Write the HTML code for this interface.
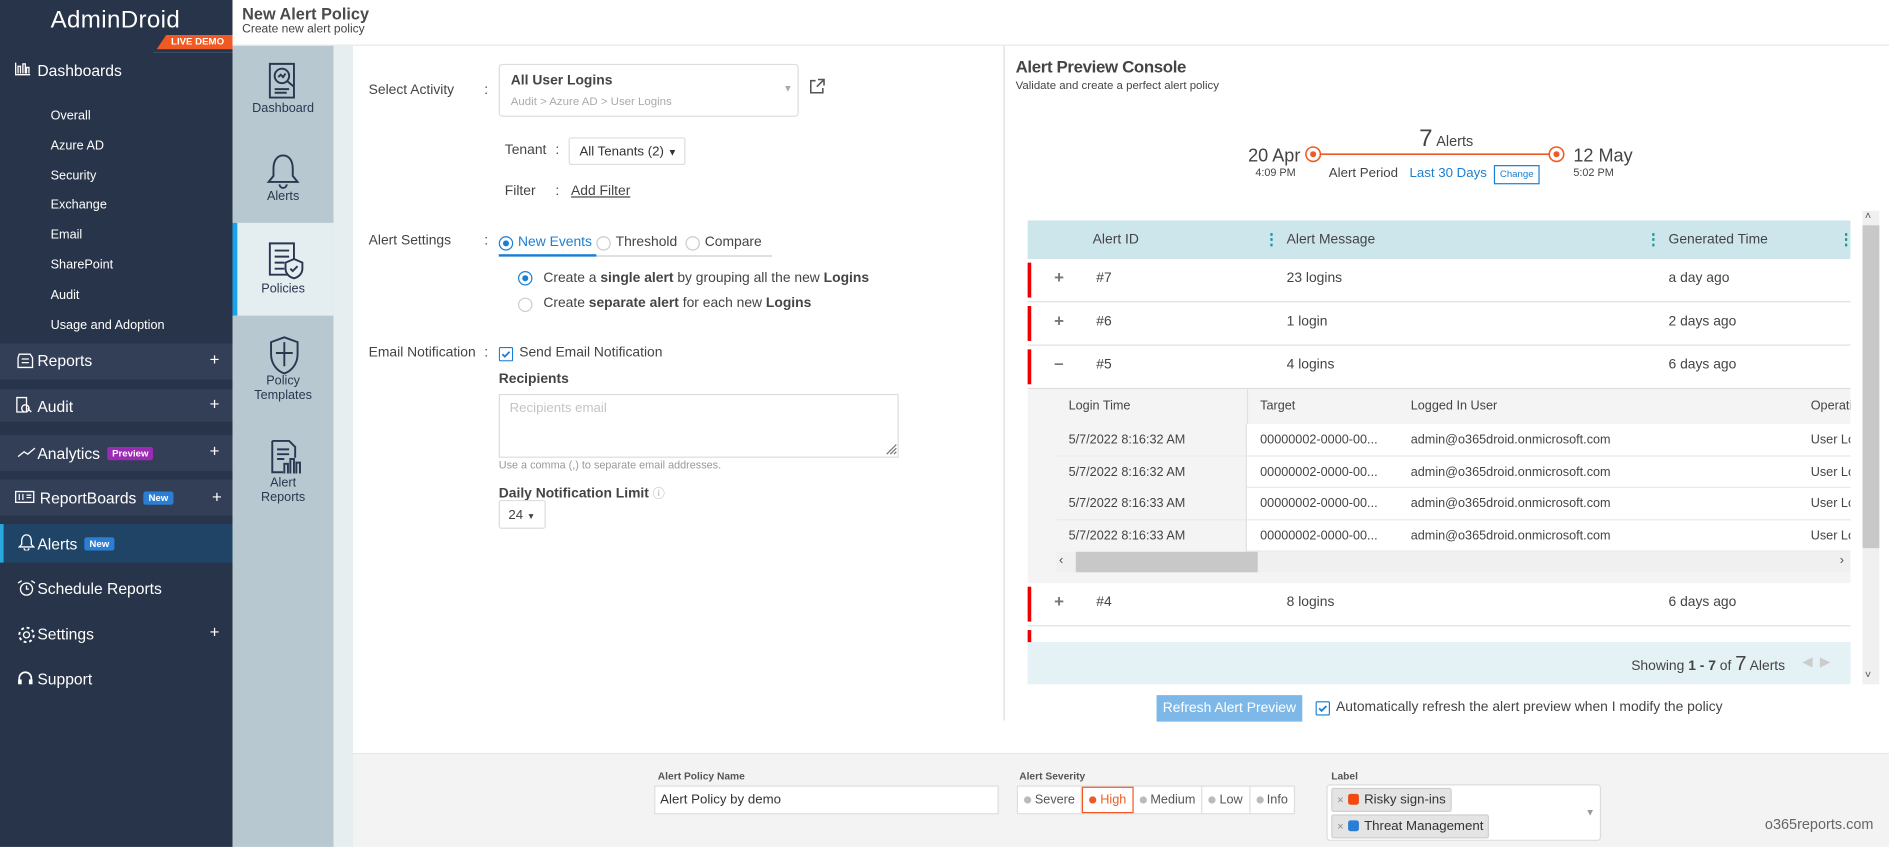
<!DOCTYPE html>
<html><head><meta charset="utf-8">
<style>
*{box-sizing:border-box;margin:0;padding:0}
html,body{width:1889px;height:847px;overflow:hidden;background:#fff}
#root{position:absolute;left:0;top:0;width:1568px;height:703px;transform:scale(1.20472);transform-origin:0 0;font-family:"Liberation Sans",Arial,sans-serif;color:#444;font-size:11px}
.a{position:absolute;white-space:nowrap}
.side{left:0;top:0;width:193px;height:703px;background:#283449}
.side .t{color:#fff}
.band{position:absolute;left:0;width:193px;height:30px;background:#323f57}
.plus{position:absolute;left:174px;color:#fff;font-size:14px}
.badge{display:inline-block;font-size:8px;font-weight:bold;color:#fff;padding:1px 4px;border-radius:2px;vertical-align:2px;margin-left:6px}
.col2{left:193px;top:38px;width:84px;height:665px;background:#b8c8d0}
.ci{position:absolute;left:0;width:84px;text-align:center;color:#2b3750;font-size:10.5px;line-height:12px}
.ico{stroke:#2b3750;fill:none;stroke-width:1.6}
.lbl{font-size:11.5px;color:#444}
.row{position:absolute;left:853px;width:683px;height:36px;background:#fff;border-bottom:1px solid #ddd}
.row .bar{position:absolute;left:0;top:3px;width:3px;height:29px;background:#e00}
.row span{position:absolute;top:10px;font-size:11.5px;color:#444;white-space:nowrap}
.sub{position:absolute;left:877px;width:659px;height:26.5px;border-bottom:1px solid #e6e6e6;background:#fff}
.sub span{position:absolute;top:7px;font-size:10.5px;color:#444;white-space:nowrap}
.sub .lt{left:0;top:0;width:158px;height:26px;background:#f4f4f4;border-right:1px solid #e0e0e0}
.kb{position:absolute;color:#1a9a9a;font-weight:bold;font-size:13px;top:191px}
.sev{display:inline-block;height:22px;line-height:22px;padding:0 5px;border-right:1px solid #ddd;font-size:10.5px;color:#555;vertical-align:top}
.dot{display:inline-block;width:6px;height:6px;border-radius:50%;background:#bbb;margin-right:3px;vertical-align:0}
.chip{position:absolute;left:3px;height:20px;background:#e4e4e4;border:1px solid #d0d0d0;border-radius:2px;padding:0 4px;line-height:18px;font-size:11px;color:#333}
.sq{display:inline-block;width:9px;height:9px;border-radius:2px;margin:0 4px 0 4px;vertical-align:-1px}
</style></head><body><div id="root">

<!-- sidebar -->
<div class="a side">
 <div class="a t" style="left:42px;top:6px;font-size:20px;letter-spacing:0.3px">AdminDroid</div>
 <div class="a" style="left:130px;top:29px;width:63px;height:12px;background:#f05a22;clip-path:polygon(8px 0,100% 0,100% 100%,0 100%);color:#fff;font-size:8px;font-weight:bold;text-align:right;padding-right:7px;line-height:12px">LIVE DEMO</div>
 <div class="a" style="left:127px;top:43px;width:66px;height:1px;background:#3d4a63"></div>
 <svg class="a" style="left:12px;top:51px" width="14" height="12"><path d="M1 1v10h12M3 10V4h2v6M7 10V2h2v8M10 10V5h2v5" stroke="#fff" fill="none" stroke-width="1.1"/></svg>
 <div class="a t" style="left:31px;top:51px;font-size:13px">Dashboards</div>
 <div class="a t" style="left:42px;top:84px;font-size:10.5px;line-height:24.8px">Overall<br>Azure AD<br>Security<br>Exchange<br>Email<br>SharePoint<br>Audit<br>Usage and Adoption</div>
 <div class="band" style="top:285px"></div><div class="band" style="top:323px;height:27px"></div><div class="band" style="top:361px"></div><div class="band" style="top:398px"></div>
 <div class="a" style="left:0;top:435px;width:193px;height:32px;background:#1f4466;border-left:3px solid #29a8e0"></div>
 <svg class="a" style="left:14px;top:293px" width="15" height="13"><path d="M2 1h9l2 3v8H1V4z M4 5h6M4 8h6" stroke="#fff" fill="none" stroke-width="1.1"/></svg>
 <div class="a t" style="left:31px;top:292px;font-size:13px">Reports</div><div class="plus" style="top:290px">+</div>
 <svg class="a" style="left:13px;top:329px" width="15" height="14"><path d="M1 1h8v12H1z M8 7a3 3 0 1 0 .1 0M10 10l3 3" stroke="#fff" fill="none" stroke-width="1.1"/></svg>
 <div class="a t" style="left:31px;top:330px;font-size:13px">Audit</div><div class="plus" style="top:327px">+</div>
 <svg class="a" style="left:14px;top:371px" width="17" height="9"><path d="M1 8l5-4 3 2 6-5" stroke="#fff" fill="none" stroke-width="1.1"/></svg>
 <div class="a t" style="left:31px;top:369px;font-size:13px">Analytics<span class="badge" style="background:#9b2bb3">Preview</span></div><div class="plus" style="top:366px">+</div>
 <svg class="a" style="left:12px;top:407px" width="17" height="11"><rect x="1" y="1" width="15" height="9" stroke="#fff" fill="none" stroke-width="1.1"/><path d="M4 3v5M7 3v5M10 4h4M10 6h4" stroke="#fff" stroke-width="1"/></svg>
 <div class="a t" style="left:33px;top:406px;font-size:13px">ReportBoards<span class="badge" style="background:#2a7fd4">New</span></div><div class="plus" style="top:404px;left:176px">+</div>
 <svg class="a" style="left:15px;top:443px" width="14" height="14"><path d="M7 1c3 0 4 3 4 5v3l2 2H1l2-2V6c0-2 1-5 4-5zM5 12a2 2 0 0 0 4 0" stroke="#fff" fill="none" stroke-width="1.1"/></svg>
 <div class="a t" style="left:31px;top:444px;font-size:13px">Alerts<span class="badge" style="background:#2a7fd4">New</span></div>
 <svg class="a" style="left:14px;top:481px" width="16" height="14"><circle cx="8" cy="8" r="5" stroke="#fff" fill="none" stroke-width="1.1"/><path d="M8 5v3h2M1 3l3-2M15 3l-3-2" stroke="#fff" fill="none" stroke-width="1.1"/></svg>
 <div class="a t" style="left:31px;top:481px;font-size:13px">Schedule Reports</div>
 <svg class="a" style="left:14px;top:519px" width="16" height="16"><circle cx="8" cy="8" r="2.5" stroke="#fff" fill="none" stroke-width="1.1"/><circle cx="8" cy="8" r="6" stroke="#fff" fill="none" stroke-width="1.6" stroke-dasharray="2.4 2.3"/></svg>
 <div class="a t" style="left:31px;top:519px;font-size:13px">Settings</div><div class="plus" style="top:516px">+</div>
 <svg class="a" style="left:14px;top:556px" width="14" height="13"><path d="M2 9V7a5 5 0 0 1 10 0v2" stroke="#fff" fill="none" stroke-width="1.4"/><rect x="1" y="8" width="3" height="4" fill="#fff"/><rect x="10" y="8" width="3" height="4" fill="#fff"/></svg>
 <div class="a t" style="left:31px;top:556px;font-size:13px">Support</div>
</div>

<!-- header -->
<div class="a" style="left:193px;top:0;width:1375px;height:38px;background:#fff;border-bottom:1px solid #e8e8e8"></div>
<div class="a" style="left:201px;top:4px;font-size:13.5px;font-weight:bold;color:#4a4a4a">New Alert Policy</div>
<div class="a" style="left:201px;top:19px;font-size:10px;color:#444">Create new alert policy</div>

<!-- col2 -->
<div class="a col2">
 <svg class="a" style="left:28px;top:13px" width="30" height="33"><path class="ico" d="M3 2h20v28H3z M7 23h12M7 26h10"/><circle class="ico" cx="13" cy="12" r="6"/><path class="ico" d="M17 16l6 5M10 13l2-2 2 2 2-3"/></svg>
 <div class="ci" style="top:46px">Dashboard</div>
 <svg class="a" style="left:27px;top:88px" width="30" height="32"><path class="ico" stroke-width="2" d="M15 3c6 0 8 6 8 11v6l4 5H3l4-5v-6c0-5 2-11 8-11zM12 27a3 3 0 0 0 6 0"/></svg>
 <div class="ci" style="top:119px">Alerts</div>
 <div class="a" style="left:0;top:147px;width:84px;height:77px;background:#e4edf0;border-left:4px solid #1aa3e8"></div>
 <svg class="a" style="left:29px;top:162px" width="32" height="34"><path class="ico" d="M2 2h20v26H2z M6 8h12M6 13h12M6 18h8M6 23h8"/><path d="M22 15l7 3v5c0 4-3 7-7 8-4-1-7-4-7-8v-5z" fill="#e4edf0" stroke="#2b3750" stroke-width="1.6"/><path class="ico" d="M19 23l2 2 4-4"/></svg>
 <div class="ci" style="top:196px">Policies</div>
 <svg class="a" style="left:29px;top:240px" width="28" height="34"><path class="ico" stroke-width="2" d="M14 2l11 4v10c0 8-5 14-11 16C8 30 3 24 3 16V6z"/><path class="ico" d="M14 6v20M7 15h14"/></svg>
 <div class="ci" style="top:272px">Policy<br>Templates</div>
 <svg class="a" style="left:30px;top:326px" width="28" height="32"><path class="ico" d="M3 2h14l5 5v9M3 2v26h9M7 9h10M7 13h10M7 17h6"/><path class="ico" d="M13 29v-8h3v8M18 29V17h3v12M23 29v-9h3v9"/></svg>
 <div class="ci" style="top:357px">Alert<br>Reports</div>
</div>
<div class="a" style="left:277px;top:38px;width:16px;height:665px;background:#e6eef0"></div>

<!-- left form -->
<div class="a lbl" style="left:306px;top:69px">Select Activity</div><div class="a lbl" style="left:402px;top:69px">:</div>
<div class="a" style="left:414px;top:53px;width:249px;height:44px;border:1px solid #ddd;border-radius:3px"></div>
<div class="a" style="left:424px;top:61px;font-size:11.5px;font-weight:bold;color:#444">All User Logins</div>
<div class="a" style="left:424px;top:79px;font-size:9.5px;color:#aaa">Audit &gt; Azure AD &gt; User Logins</div>
<div class="a" style="left:650px;top:69px;font-size:8px;color:#aaa">▼</div>
<svg class="a" style="left:671px;top:65px" width="14" height="14"><path d="M6 2H2v10h10V8M8 1h5v5M13 1L7 7" stroke="#555" fill="none" stroke-width="1.3"/></svg>

<div class="a lbl" style="left:419px;top:119px">Tenant</div><div class="a lbl" style="left:461px;top:119px">:</div>
<div class="a" style="left:472px;top:114px;width:97px;height:23px;border:1px solid #ddd;border-radius:2px;font-size:11px;color:#333;padding:5px 0 0 8px">All Tenants (2) <span style="font-size:8px">▼</span></div>
<div class="a lbl" style="left:419px;top:153px">Filter</div><div class="a lbl" style="left:461px;top:153px">:</div>
<div class="a" style="left:474px;top:153px;font-size:11.5px;color:#444;text-decoration:underline">Add Filter</div>

<div class="a lbl" style="left:306px;top:194px">Alert Settings</div><div class="a lbl" style="left:402px;top:194px">:</div>
<svg class="a" style="left:413px;top:195px" width="230" height="20"><circle cx="7" cy="7" r="5.5" fill="#fff" stroke="#1a7fd4"/><circle cx="7" cy="7" r="2.5" fill="#1a7fd4"/><circle cx="88" cy="7" r="5.5" fill="#fff" stroke="#ccc"/><circle cx="162" cy="7" r="5.5" fill="#fff" stroke="#ccc"/><rect x="1" y="17" width="227" height="1" fill="#ccc"/><rect x="1" y="16" width="81" height="2" fill="#1a7fd4"/></svg>
<div class="a" style="left:430px;top:195px;font-size:11.5px;color:#1a7fd4">New Events</div>
<div class="a" style="left:511px;top:195px;font-size:11.5px">Threshold</div>
<div class="a" style="left:585px;top:195px;font-size:11.5px">Compare</div>
<svg class="a" style="left:429px;top:224px" width="14" height="36"><circle cx="7" cy="7" r="5.5" fill="#fff" stroke="#1a7fd4"/><circle cx="7" cy="7" r="2.5" fill="#1a7fd4"/><circle cx="7" cy="29" r="5.5" fill="#fff" stroke="#ccc"/></svg>
<div class="a" style="left:451px;top:225px;font-size:11.5px">Create a <b>single alert</b> by grouping all the new <b>Logins</b></div>
<div class="a" style="left:451px;top:246px;font-size:11.5px">Create <b>separate alert</b> for each new <b>Logins</b></div>

<div class="a lbl" style="left:306px;top:287px">Email Notification</div><div class="a lbl" style="left:402px;top:287px">:</div>
<svg class="a" style="left:414px;top:288px" width="12" height="12"><rect x="0.5" y="0.5" width="11" height="11" rx="1" fill="#fff" stroke="#1a7fd4"/><path d="M3 6l2 2 4-4" stroke="#1a7fd4" fill="none" stroke-width="1.5"/></svg>
<div class="a" style="left:431px;top:287px;font-size:11.5px">Send Email Notification</div>
<div class="a" style="left:414px;top:309px;font-size:11.5px;font-weight:bold">Recipients</div>
<div class="a" style="left:414px;top:327px;width:332px;height:53px;border:1px solid #ddd"></div>
<div class="a" style="left:423px;top:333px;font-size:11px;color:#c4c4c4">Recipients email</div>
<svg class="a" style="left:734px;top:367px" width="11" height="11"><path d="M10 2L2 10M10 5L5 10M10 8L8 10" stroke="#777"/></svg>
<div class="a" style="left:414px;top:381px;font-size:9px;color:#999">Use a comma (,) to separate email addresses.</div>
<div class="a" style="left:414px;top:401px;font-size:11.5px;font-weight:bold">Daily Notification Limit <span style="font-weight:normal;color:#aaa;font-size:10px">ⓘ</span></div>
<div class="a" style="left:414px;top:415px;width:39px;height:24px;border:1px solid #ddd;border-radius:2px;font-size:11px;padding:6px 0 0 7px;color:#444">24 <span style="font-size:7px">▼</span></div>

<div class="a" style="left:833px;top:38px;width:1px;height:560px;background:#ddd"></div>

<!-- right -->
<div class="a" style="left:843px;top:47px;font-size:14px;color:#444;font-weight:bold;letter-spacing:-0.3px">Alert Preview Console</div>
<div class="a" style="left:843px;top:66px;font-size:9.5px;color:#444">Validate and create a perfect alert policy</div>
<div class="a" style="left:1036px;top:121px;font-size:15px;color:#444">20 Apr</div>
<div class="a" style="left:1042px;top:138px;font-size:9px;color:#444">4:09 PM</div>
<svg class="a" style="left:1082px;top:120px" width="218" height="16"><line x1="14" y1="8" x2="204" y2="8" stroke="#f05a22" stroke-width="1.3"/><circle cx="8" cy="8" r="6" fill="#fff" stroke="#f05a22" stroke-width="1.3"/><circle cx="8" cy="8" r="2.5" fill="#f05a22"/><circle cx="210" cy="8" r="6" fill="#fff" stroke="#f05a22" stroke-width="1.3"/><circle cx="210" cy="8" r="2.5" fill="#f05a22"/></svg>
<div class="a" style="left:1306px;top:121px;font-size:15px;color:#444">12 May</div>
<div class="a" style="left:1306px;top:138px;font-size:9px;color:#444">5:02 PM</div>
<div class="a" style="left:1178px;top:104px;color:#444"><span style="font-size:20px">7</span> <span style="font-size:12px">Alerts</span></div>
<div class="a" style="left:1103px;top:138px;font-size:11px;color:#444">Alert Period</div>
<div class="a" style="left:1170px;top:138px;font-size:11px;color:#1a7fd4">Last 30 Days</div>
<div class="a" style="left:1240px;top:137px;width:38px;height:16px;border:1px solid #1a7fd4;font-size:8px;color:#1a7fd4;text-align:center;line-height:14px">Change</div>

<div class="a" style="left:853px;top:183px;width:683px;height:32px;background:#cde6ec"></div>
<div class="a" style="left:907px;top:193px;font-size:11.5px">Alert ID</div>
<div class="a" style="left:1068px;top:193px;font-size:11.5px">Alert Message</div>
<div class="a" style="left:1385px;top:193px;font-size:11.5px">Generated Time</div>
<div class="kb a" style="left:1049px">⋮</div><div class="kb a" style="left:1366px">⋮</div><div class="kb a" style="left:1526px">⋮</div>

<div class="row" style="top:215px"><div class="bar"></div><span style="left:22px;font-weight:bold;color:#777;font-size:14px;top:7px">+</span><span style="left:57px">#7</span><span style="left:215px">23 logins</span><span style="left:532px">a day ago</span></div>
<div class="row" style="top:251px"><div class="bar"></div><span style="left:22px;font-weight:bold;color:#777;font-size:14px;top:7px">+</span><span style="left:57px">#6</span><span style="left:215px">1 login</span><span style="left:532px">2 days ago</span></div>
<div class="row" style="top:287px"><div class="bar"></div><span style="left:22px;font-weight:bold;color:#777;font-size:14px;top:6px">–</span><span style="left:57px">#5</span><span style="left:215px">4 logins</span><span style="left:532px">6 days ago</span></div>
<div class="a" style="left:853px;top:323px;width:683px;height:161px;background:#f4f4f4"></div>
<div class="a" style="left:1035px;top:323px;width:1px;height:30px;background:#e0e0e0"></div>
<div class="a" style="left:887px;top:331px;font-size:10.5px">Login Time</div>
<div class="a" style="left:1046px;top:331px;font-size:10.5px">Target</div>
<div class="a" style="left:1171px;top:331px;font-size:10.5px">Logged In User</div>
<div class="a" style="left:1503px;top:331px;font-size:10.5px;width:33px;overflow:hidden">Operation</div>
<div class="sub" style="top:352px"><div class="a lt"></div><span style="left:10px">5/7/2022 8:16:32 AM</span><span style="left:169px">00000002-0000-00...</span><span style="left:294px">admin@o365droid.onmicrosoft.com</span><span style="left:626px;width:33px;overflow:hidden">User Logins</span></div>
<div class="sub" style="top:378.5px"><div class="a lt"></div><span style="left:10px">5/7/2022 8:16:32 AM</span><span style="left:169px">00000002-0000-00...</span><span style="left:294px">admin@o365droid.onmicrosoft.com</span><span style="left:626px;width:33px;overflow:hidden">User Logins</span></div>
<div class="sub" style="top:405px"><div class="a lt"></div><span style="left:10px">5/7/2022 8:16:33 AM</span><span style="left:169px">00000002-0000-00...</span><span style="left:294px">admin@o365droid.onmicrosoft.com</span><span style="left:626px;width:33px;overflow:hidden">User Logins</span></div>
<div class="sub" style="top:431.5px"><div class="a lt"></div><span style="left:10px">5/7/2022 8:16:33 AM</span><span style="left:169px">00000002-0000-00...</span><span style="left:294px">admin@o365droid.onmicrosoft.com</span><span style="left:626px;width:33px;overflow:hidden">User Logins</span></div>
<div class="a" style="left:877px;top:458px;width:659px;height:17px;background:#f0f0f0"></div>
<div class="a" style="left:893px;top:458px;width:151px;height:17px;background:#c8c8c8"></div>
<div class="a" style="left:879px;top:459px;font-size:11px;color:#555">‹</div>
<div class="a" style="left:1527px;top:459px;font-size:11px;color:#555">›</div>
<div class="row" style="top:484px"><div class="bar"></div><span style="left:22px;font-weight:bold;color:#777;font-size:14px;top:7px">+</span><span style="left:57px">#4</span><span style="left:215px">8 logins</span><span style="left:532px">6 days ago</span></div>
<div class="row" style="top:520px;height:14px;border:0"><div class="bar" style="top:3px;height:11px"></div></div>
<div class="a" style="left:853px;top:533px;width:683px;height:35px;background:#e4f1f5"></div>
<div class="a" style="left:1354px;top:541px;font-size:11.5px;color:#444">Showing <b>1 - 7</b> of <span style="font-size:17px">7</span> Alerts</div>
<div class="a" style="left:1496px;top:543px;font-size:11px;color:#ccc">◀ &nbsp;▶</div>
<div class="a" style="left:1546px;top:175px;width:14px;height:393px;background:#f0f0f0"></div>
<div class="a" style="left:1546px;top:187px;width:14px;height:268px;background:#c8c8c8"></div>
<div class="a" style="left:1548px;top:174px;font-size:9px;color:#555">˄</div>
<div class="a" style="left:1548px;top:555px;font-size:9px;color:#555">˅</div>

<div class="a" style="left:960px;top:577px;width:121px;height:22px;background:#7db8e8;color:#fff;font-size:11.5px;text-align:center;line-height:22px">Refresh Alert Preview</div>
<svg class="a" style="left:1092px;top:582px" width="12" height="12"><rect x="0.5" y="0.5" width="11" height="11" rx="1" fill="#fff" stroke="#1a7fd4"/><path d="M3 6l2 2 4-4" stroke="#1a7fd4" fill="none" stroke-width="1.5"/></svg>
<div class="a" style="left:1109px;top:581px;font-size:11.5px;color:#444">Automatically refresh the alert preview when I modify the policy</div>

<!-- footer -->
<div class="a" style="left:293px;top:625px;width:1275px;height:78px;background:#f3f3f3;border-top:1px solid #e6e6e6"></div>
<div class="a" style="left:546px;top:639px;font-size:8.5px;font-weight:bold;color:#555">Alert Policy Name</div>
<div class="a" style="left:543px;top:652px;width:286px;height:24px;background:#fff;border:1px solid #ddd;font-size:11px;color:#333;padding:5px 0 0 4px">Alert Policy by demo</div>
<div class="a" style="left:846px;top:639px;font-size:8.5px;font-weight:bold;color:#555">Alert Severity</div>
<div class="a" style="left:844px;top:652px;height:24px;background:#fff;border:1px solid #ddd;white-space:nowrap;font-size:0"><span class="sev"><span class="dot"></span>Severe</span><span class="sev" style="border:1px solid #f05a22;color:#f05a22;line-height:20px"><span class="dot" style="background:#f05a22"></span>High</span><span class="sev"><span class="dot"></span>Medium</span><span class="sev"><span class="dot"></span>Low</span><span class="sev" style="border:0"><span class="dot"></span>Info</span></div>
<div class="a" style="left:1105px;top:639px;font-size:8.5px;font-weight:bold;color:#555">Label</div>
<div class="a" style="left:1101px;top:651px;width:228px;height:47px;background:#fff;border:1px solid #ddd;border-radius:3px">
 <div class="chip" style="top:2px"><span style="color:#888;font-size:9px">×</span><span class="sq" style="background:#f04a10"></span>Risky sign-ins</div>
 <div class="chip" style="top:24px"><span style="color:#888;font-size:9px">×</span><span class="sq" style="background:#2a7fd4"></span>Threat Management</div>
 <div class="a" style="left:214px;top:18px;font-size:8px;color:#999">▼</div>
</div>
<div class="a" style="left:1465px;top:677px;font-size:12px;color:#666">o365reports.com</div>

</div></body></html>
